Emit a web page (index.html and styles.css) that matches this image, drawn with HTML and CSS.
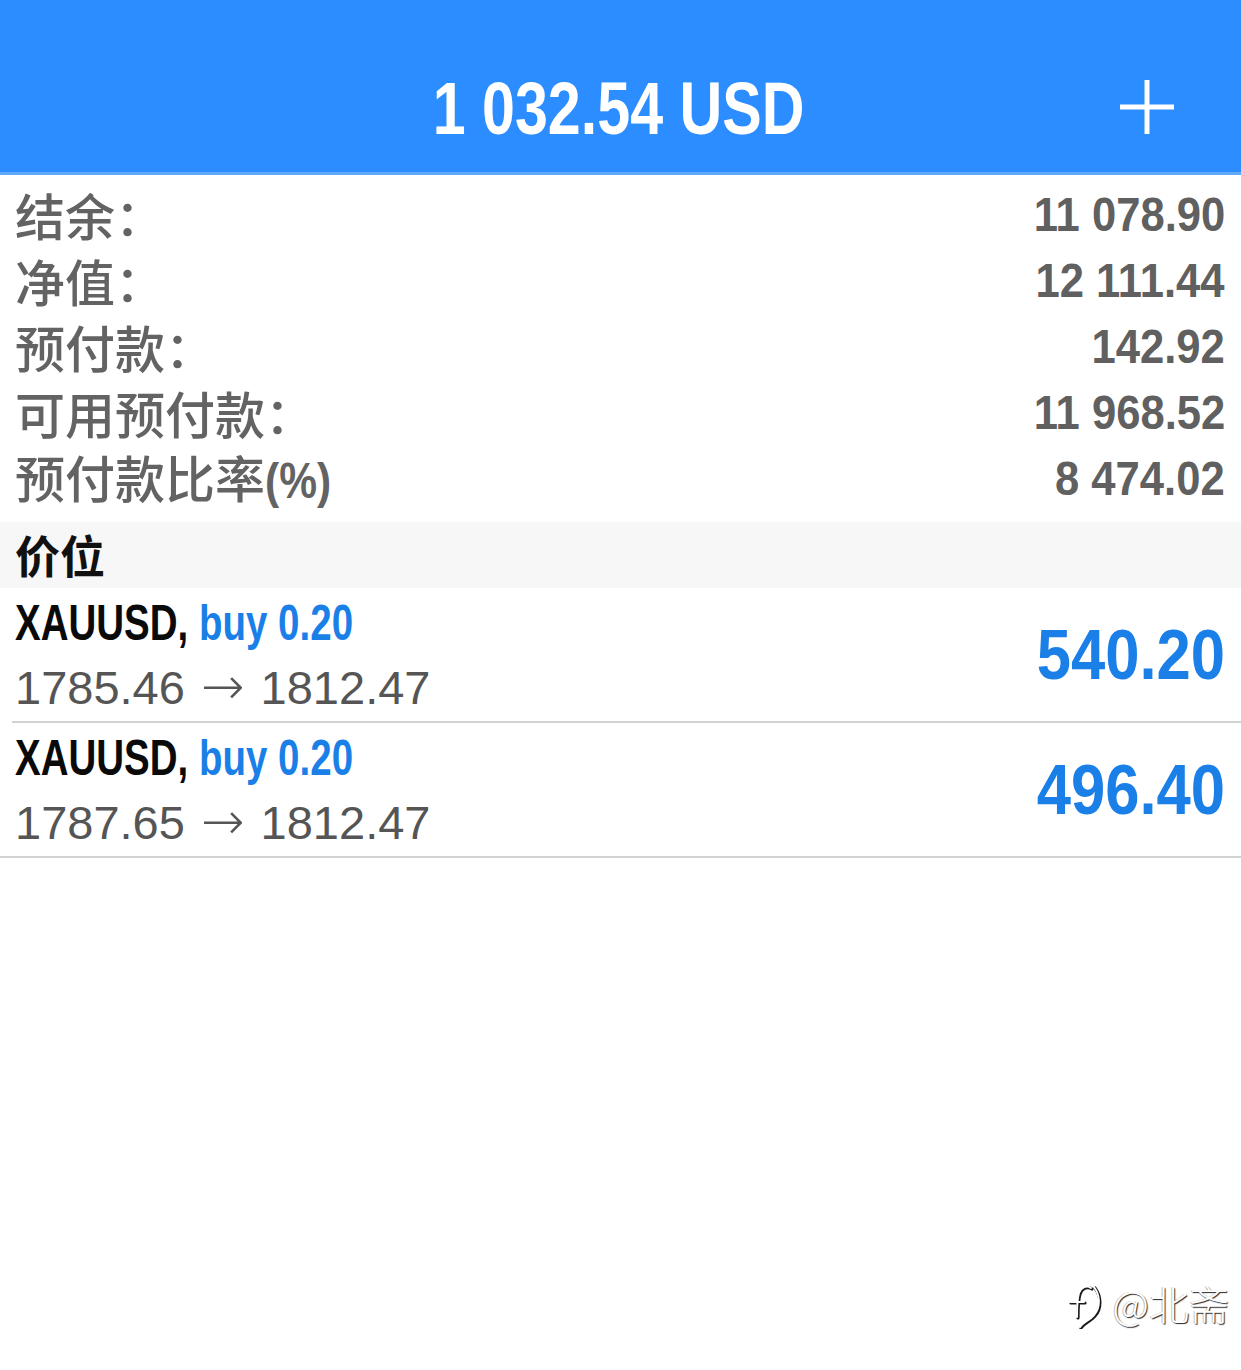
FILE: index.html
```html
<!DOCTYPE html>
<html lang="zh-CN">
<head>
<meta charset="utf-8">
<title>交易</title>
<link rel="stylesheet" href="styles.css">
</head>
<body>
<div class="page">
  <header class="topbar">
    <div class="side"></div>
    <div class="title"><span class="cond cond-title">1 032.54 USD</span></div>
    <div class="side side-right">
      <svg class="plus" width="56" height="56" viewBox="0 0 56 56" aria-hidden="true">
        <line x1="28" y1="1" x2="28" y2="55" stroke="#fff" stroke-width="5"/>
        <line x1="1" y1="28" x2="55" y2="28" stroke="#fff" stroke-width="5"/>
      </svg>
    </div>
  </header>

  <section class="summary">
    <div class="srow"><span class="label">结余：</span><span class="cond cond-val">11 078.90</span></div>
    <div class="srow"><span class="label">净值：</span><span class="cond cond-val">12 111.44</span></div>
    <div class="srow"><span class="label">预付款：</span><span class="cond cond-val">142.92</span></div>
    <div class="srow"><span class="label">可用预付款：</span><span class="cond cond-val">11 968.52</span></div>
    <div class="srow"><span class="label">预付款比率<span class="pct">(%)</span></span><span class="cond cond-val">8 474.02</span></div>
  </section>

  <div class="section-head">价位</div>

  <section class="positions">
    <div class="pos">
      <div class="pos-left">
        <div class="pos-line1"><span class="cond cond-sym"><span class="sym">XAUUSD,</span> <span class="side-buy">buy 0.20</span></span></div>
        <div class="pos-line2">1785.46 <span class="arrow">→</span> 1812.47</div>
      </div>
      <span class="cond cond-profit">540.20</span>
    </div>
    <div class="pos">
      <div class="pos-left">
        <div class="pos-line1"><span class="cond cond-sym"><span class="sym">XAUUSD,</span> <span class="side-buy">buy 0.20</span></span></div>
        <div class="pos-line2">1787.65 <span class="arrow">→</span> 1812.47</div>
      </div>
      <span class="cond cond-profit">496.40</span>
    </div>
  </section>

  <div class="watermark">
    <svg class="wm-logo" width="40" height="52" viewBox="0 0 40 52" aria-hidden="true">
      <g fill="none" stroke-linecap="round">
        <g stroke="#1a1a1a" stroke-width="3.2" transform="translate(1 1)">
          <path d="M12 40 C12 30 12 22 14 16 C16 10 22 8 26 11"/>
          <path d="M5 25 L19 25"/>
          <path d="M29 10 C35 18 36 30 29 38 C24 44 18 45 15 50"/>
        </g>
        <g stroke="#ffffff" stroke-width="2">
          <path d="M12 40 C12 30 12 22 14 16 C16 10 22 8 26 11"/>
          <path d="M5 25 L19 25"/>
          <path d="M29 10 C35 18 36 30 29 38 C24 44 18 45 15 50"/>
        </g>
      </g>
    </svg>
    <span class="wm-text">@北斋</span>
  </div>
</div>
</body>
</html>
```

FILE: styles.css
```css
html, body {
  margin: 0;
  padding: 0;
  background: #ffffff;
}

.page {
  position: relative;
  width: 1241px;
  min-height: 1370px;
  font-family: "Liberation Sans", Arial, "Noto Sans CJK SC", sans-serif;
  overflow: hidden;
}

.cond {
  display: inline-block;
  font-family: "Liberation Sans", Arial, sans-serif;
  font-weight: bold;
  white-space: nowrap;
}

/* Top bar */
.topbar {
  box-sizing: border-box;
  height: 175px;
  background: #2b8dff;
  border-bottom: 3px solid #5fabf8;
  display: grid;
  grid-template-columns: 1fr auto 1fr;
  align-items: start;
  padding-top: 72px;
}

.title {
  line-height: 74px;
  height: 74px;
}

.cond-title {
  font-size: 74px;
  color: #ffffff;
  transform: scaleX(0.8);
  transform-origin: 48% 50%;
}

.side-right {
  display: flex;
  justify-content: flex-end;
  padding-right: 66px;
  padding-top: 7px;
}

.plus {
  display: block;
}

/* Summary */
.summary {
  padding: 6px 16px 11px 15px;
}

.srow {
  display: flex;
  justify-content: space-between;
  align-items: center;
  height: 66px;
}

.label {
  font-family: "Noto Sans CJK SC", "Noto Sans", sans-serif;
  font-weight: 500;
  font-size: 50px;
  color: #636363;
  line-height: 66px;
  white-space: nowrap;
}

.pct {
  font-family: "Liberation Sans", Arial, sans-serif;
  font-weight: bold;
  display: inline-block;
  transform: scaleX(0.85);
  transform-origin: 0 50%;
}

.cond-val {
  font-size: 49px;
  line-height: 66px;
  color: #606060;
  transform: scaleX(0.89);
  transform-origin: 100% 50%;
}

/* Section header */
.section-head {
  height: 66px;
  line-height: 66px;
  background: #f7f7f7;
  padding-left: 15px;
  font-family: "Noto Sans CJK SC", "Noto Sans", sans-serif;
  font-weight: bold;
  font-size: 45px;
  color: #111111;
}

/* Positions */
.pos {
  box-sizing: border-box;
  height: 135px;
  display: flex;
  justify-content: space-between;
  align-items: center;
  margin-left: 12px;
  padding: 0 16px 0 3px;
  border-bottom: 2px solid #d2d2d2;
}

.pos:last-child {
  margin-left: 0;
  padding-left: 15px;
}

.pos-left {
  display: flex;
  flex-direction: column;
}

.pos-line1 {
  height: 63px;
  line-height: 63px;
}

.cond-sym {
  font-size: 50px;
  transform: scaleX(0.77);
  transform-origin: 0 50%;
}

.sym {
  color: #0a0a0a;
}

.side-buy {
  color: #1b7fe8;
}

.pos-line2 {
  height: 63px;
  line-height: 63px;
  font-size: 47px;
  color: #555555;
  white-space: nowrap;
}

.arrow {
  font-family: "DejaVu Sans", sans-serif;
  font-weight: 200;
  font-size: 52px;
  margin: 0 3px;
}

.cond-profit {
  font-size: 70px;
  color: #1b7fe8;
  transform: scaleX(0.88);
  transform-origin: 100% 50%;
}

/* Watermark overlay */
.watermark {
  position: absolute;
  right: 12px;
  top: 1277px;
  display: flex;
  align-items: center;
  gap: 8px;
}

.wm-logo {
  display: block;
}

.wm-text {
  font-family: "Noto Sans CJK SC", "Noto Sans", sans-serif;
  font-weight: 300;
  font-size: 40px;
  line-height: 50px;
  color: #ffffff;
  text-shadow: 1px 1px 1px rgba(0, 0, 0, 0.85), -1px 0 0 rgba(0, 0, 0, 0.25);
}
```
